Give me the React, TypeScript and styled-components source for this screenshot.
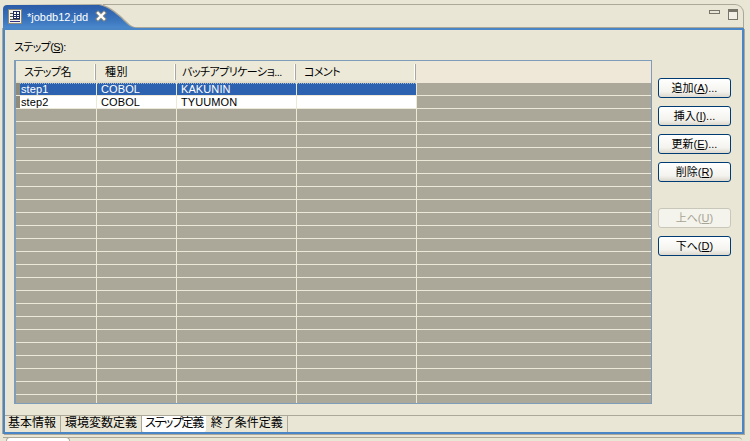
import styled, { createGlobalStyle } from "styled-components";

const GlobalStyle = createGlobalStyle`
    html, body {
        margin: 0;
        padding: 0;
        background: #e9e6d6;
        overflow: hidden;
    }
    body {
        font-family: "Liberation Sans", "Noto Sans CJK JP", sans-serif;
        font-size: 11px;
        color: #000;
    }
`;

const Page = styled.div`
    width: 750px;
    height: 441px;
    display: flex;
    flex-direction: column;
    overflow: hidden;
    background: #e9e6d6;
`;

const TabStrip = styled.div`
    height: 28px;
    padding: 4px 6px 0 3px;
    display: flex;
    box-sizing: border-box;
`;

const ActiveTab = styled.div`
    position: relative;
    z-index: 1;
    width: 136px;
    height: 24px;
    flex: none;
    padding-left: 4px;
    box-sizing: border-box;
    display: flex;
    align-items: center;
    color: #fff;
    font-size: 11px;
    background: #aca899;
    clip-path: path("M0 24 L0 5 Q0 1 4 1 L97 0 C107 2 113 8 119 13 C125 19 128 23 136 24 Z");

    &::before {
        content: "";
        position: absolute;
        inset: 0;
        background: linear-gradient(#2a5aa6, #3a74bc 65%, #4a88cc);
        clip-path: path("M0 24 L0 5 Q0 1 4 1 L96 1 C106 3 112 9 118 14 C124 20 127 24 135 24 Z");
    }

    & > * {
        position: relative;
    }
`;

const TabTitle = styled.span`
    margin-left: 4px;
    width: 68px;
    padding-top: 1px;
    font-family: "Liberation Sans", sans-serif;
`;

const StripRest = styled.div`
    flex: 1;
    border-top: 1px solid #aca899;
    border-right: 1px solid #aca899;
    border-bottom: 1px solid #aca899;
    border-top-right-radius: 9px;
    margin-left: -36px;
    display: flex;
    justify-content: flex-end;
    gap: 8px;
    padding: 4px 5px 0 0;
`;

const MinButton = styled.div`
    width: 9px;
    height: 2px;
    margin-top: 1px;
    border: 1px solid #77756a;
    background: #e9e6d6;
`;

const MaxButton = styled.div`
    width: 8px;
    height: 7px;
    border: 1px solid #77756a;
    border-top-width: 3px;
    background: #f2f0e6;
`;

const Pane = styled.div`
    width: 741px;
    height: 406px;
    margin-left: 3px;
    box-sizing: border-box;
    border: 2px solid #4a86c6;
    box-shadow: 1px 1px 0 #aca899, -1px 0 0 #aca899;
    display: flex;
    flex-direction: column;
`;

const Body = styled.div`
    flex: 1;
    min-height: 0;
    display: flex;
    flex-direction: column;
    padding: 10px 11px 11px 9px;
`;

const FieldLabel = styled.div`
    height: 20px;
    font-size: 11px;
    font-feature-settings: "palt";
    letter-spacing: -0.6px;
    line-height: 14px;
`;

const Underlined = styled.span`
    text-decoration: underline;
`;

const Columns = styled.div`
    flex: 1;
    min-height: 0;
    display: flex;
    gap: 6px;
`;

const TableFrame = styled.div`
    width: 638px;
    height: 344px;
    box-sizing: border-box;
    border: 1px solid #7f9db9;
    border-left-width: 2px;
    background: #aca899;
    overflow: hidden;
`;

const HeaderRow = styled.div`
    height: 22px;
    display: grid;
    grid-template-columns: 80px 80px 120px 120px 1fr;
    background: linear-gradient(#ece9d8, #ece9d8 85%, #dcd9c8);
`;

const HeaderCell = styled.div<{ $inset?: number; $tight?: boolean; $filler?: boolean }>`
    position: relative;
    padding: 4px 0 0 ${({ $inset }) => $inset ?? 8}px;
    font-size: 11px;
    line-height: 14px;
    font-feature-settings: "palt";
    letter-spacing: ${({ $tight }) => ($tight ? "-0.55px" : "0.4px")};
    white-space: nowrap;
    overflow: hidden;
    background: ${({ $filler }) => ($filler ? "#efe8d8" : "transparent")};

    &:not(:last-child)::after {
        content: "";
        position: absolute;
        right: 0;
        top: 3px;
        bottom: 3px;
        width: 1px;
        background: #aca899;
        box-shadow: -1px 0 0 #fff;
    }
`;

const DataRow = styled.div`
    height: 13px;
    box-sizing: border-box;
    display: grid;
    grid-template-columns: 4px 77px 80px 120px 120px 1fr;
    border-bottom: 1px solid #ece9d8;
`;

const DataCell = styled.div<{ $state?: "selected" | "plain"; $inset?: number }>`
    height: 12px;
    line-height: 12px;
    padding-left: ${({ $inset }) => $inset ?? 4}px;
    box-sizing: border-box;
    font-size: 11px;
    letter-spacing: 0.1px;
    white-space: nowrap;
    overflow: hidden;
    border-right: 1px solid #ece9d8;
    background-color: ${({ $state }) =>
        $state === "selected" ? "#2d62b0" : $state === "plain" ? "#fff" : "transparent"};
    background-image: ${({ $state }) =>
        $state === "selected" ? "linear-gradient(90deg, #a8b8c8 50%, transparent 50%)" : "none"};
    background-size: 2px 1px;
    background-repeat: repeat-x;
    color: ${({ $state }) => ($state === "selected" ? "#fff" : "#000")};
`;

const Gutter = styled.div`
    height: 12px;
`;

const RowStub = styled(Gutter)`
    background: #8f8b7c;
`;

const ButtonColumn = styled.div`
    display: flex;
    flex-direction: column;
    gap: 8px;
    padding-top: 18px;
`;

const ActionButton = styled.button<{ $spaced?: boolean }>`
    width: 73px;
    height: 20px;
    padding: 0;
    margin-top: ${({ $spaced }) => ($spaced ? "18px" : "0")};
    box-sizing: border-box;
    border: 1px solid ${({ disabled }) => (disabled ? "#c9c7ba" : "#003c74")};
    border-radius: 3px;
    background: ${({ disabled }) =>
        disabled ? "#f4f3ec" : "linear-gradient(#fff, #f4f3ee 70%, #dcd8ce)"};
    color: ${({ disabled }) => (disabled ? "#a6a494" : "#000")};
    font-family: "Liberation Sans", "Noto Sans CJK JP", sans-serif;
    font-size: 11px;
    line-height: 16px;
`;

const PageTabs = styled.div`
    height: 17px;
    flex: none;
    border-top: 1px solid #aca899;
    display: flex;
    padding-left: 1px;
    box-sizing: border-box;
`;

const PageTab = styled.div<{ $active?: boolean }>`
    height: 16px;
    padding: 0 ${({ $active }) => ($active ? "3px" : "4px")};
    box-sizing: border-box;
    font-size: 12px;
    line-height: 15px;
    white-space: nowrap;
    letter-spacing: ${({ $active }) => ($active ? "-1.4px" : "0")};
    border-right: 1px solid ${({ $active }) => ($active ? "#e9e6d6" : "#aca899")};
    font-feature-settings: ${({ $active }) => ($active ? '"palt"' : "normal")};
    background: ${({ $active }) => ($active ? "#fff" : "transparent")};
    border-bottom-right-radius: ${({ $active }) => ($active ? "3px" : "0")};
    border-bottom-left-radius: ${({ $active }) => ($active ? "3px" : "0")};

    &:first-child {
        padding-left: 2px;
    }
`;

const BottomStrip = styled.div`
    margin-top: 3px;
    margin-right: 8px;
    margin-left: 3px;
    height: 4px;
    border-top: 1px solid #aca899;
    border-top-right-radius: 4px;
`;

const BottomTab = styled.div`
    width: 62px;
    height: 6px;
    margin: -1px 0 0 3px;
    background: #fff;
    border: 1px solid #aca899;
    border-bottom: none;
    border-radius: 4px 4px 0 0;
`;

const FileIcon = () => (
    <svg width="16" height="16" viewBox="0 0 16 16" shapeRendering="crispEdges">
        <rect x="1.5" y="1.5" width="13" height="14" fill="#f4f2e6" stroke="#8a8878" />
        <rect x="6.5" y="3.5" width="6" height="7" fill="#fff" stroke="#1f2a60" />
        <path d="M6 6.5h7M6 8.5h7M9.5 3v8" stroke="#1f2a60" />
        <path d="M3 5.5h3M3 8.5h3M3 11.5h10" stroke="#555" />
        <path d="M3 13.5h10" stroke="#30308a" />
    </svg>
);

const CloseIcon = () => (
    <svg width="12" height="12" viewBox="0 0 12 12">
        <path d="M3 3l6 6M9 3l-6 6" stroke="#8b8b80" strokeWidth="4" strokeLinecap="square" />
        <path d="M3 3l6 6M9 3l-6 6" stroke="#fff" strokeWidth="2.2" strokeLinecap="square" />
    </svg>
);

const rows = [
    { name: "step1", kind: "COBOL", app: "KAKUNIN", state: "selected" as const },
    { name: "step2", kind: "COBOL", app: "TYUUMON", state: "plain" as const },
];

const emptyRows = Array.from({ length: 23 }, (_, i) => i);

const headers = [
    { label: "ステップ名", inset: 8, tight: true },
    { label: "種別", inset: 9, tight: false },
    { label: "バッチアプリケーショ...", inset: 6, tight: true },
    { label: "コメント", inset: 8, tight: true },
];

const pageTabs = ["基本情報", "環境変数定義", "ステップ定義", "終了条件定義"];

const App = () => {
    return (
        <Page>
            <GlobalStyle />
            <TabStrip>
                <ActiveTab>
                    <FileIcon />
                    <TabTitle>*jobdb12.jdd</TabTitle>
                    <CloseIcon />
                </ActiveTab>
                <StripRest>
                    <MinButton />
                    <MaxButton />
                </StripRest>
            </TabStrip>
            <Pane>
                <Body>
                    <FieldLabel>
                        ステップ(<Underlined>S</Underlined>):
                    </FieldLabel>
                    <Columns>
                        <TableFrame>
                            <HeaderRow>
                                {headers.map((h) => (
                                    <HeaderCell key={h.label} $inset={h.inset} $tight={h.tight}>
                                        {h.label}
                                    </HeaderCell>
                                ))}
                                <HeaderCell $filler />
                            </HeaderRow>
                            {rows.map((r) => (
                                <DataRow key={r.name}>
                                    <RowStub />
                                    <DataCell $state={r.state} $inset={1}>{r.name}</DataCell>
                                    <DataCell $state={r.state}>{r.kind}</DataCell>
                                    <DataCell $state={r.state}>{r.app}</DataCell>
                                    <DataCell $state={r.state} />
                                    <Gutter />
                                </DataRow>
                            ))}
                            {emptyRows.map((i) => (
                                <DataRow key={i}>
                                    <Gutter />
                                    <DataCell />
                                    <DataCell />
                                    <DataCell />
                                    <DataCell />
                                    <Gutter />
                                </DataRow>
                            ))}
                        </TableFrame>
                        <ButtonColumn>
                            <ActionButton>追加(<Underlined>A</Underlined>)...</ActionButton>
                            <ActionButton>挿入(<Underlined>I</Underlined>)...</ActionButton>
                            <ActionButton>更新(<Underlined>E</Underlined>)...</ActionButton>
                            <ActionButton>削除(<Underlined>R</Underlined>)</ActionButton>
                            <ActionButton disabled $spaced>上へ(<Underlined>U</Underlined>)</ActionButton>
                            <ActionButton>下へ(<Underlined>D</Underlined>)</ActionButton>
                        </ButtonColumn>
                    </Columns>
                </Body>
                <PageTabs>
                    {pageTabs.map((t) => (
                        <PageTab key={t} $active={t === "ステップ定義"}>{t}</PageTab>
                    ))}
                </PageTabs>
            </Pane>
            <BottomStrip>
                <BottomTab />
            </BottomStrip>
        </Page>
    );
};

export default App;
